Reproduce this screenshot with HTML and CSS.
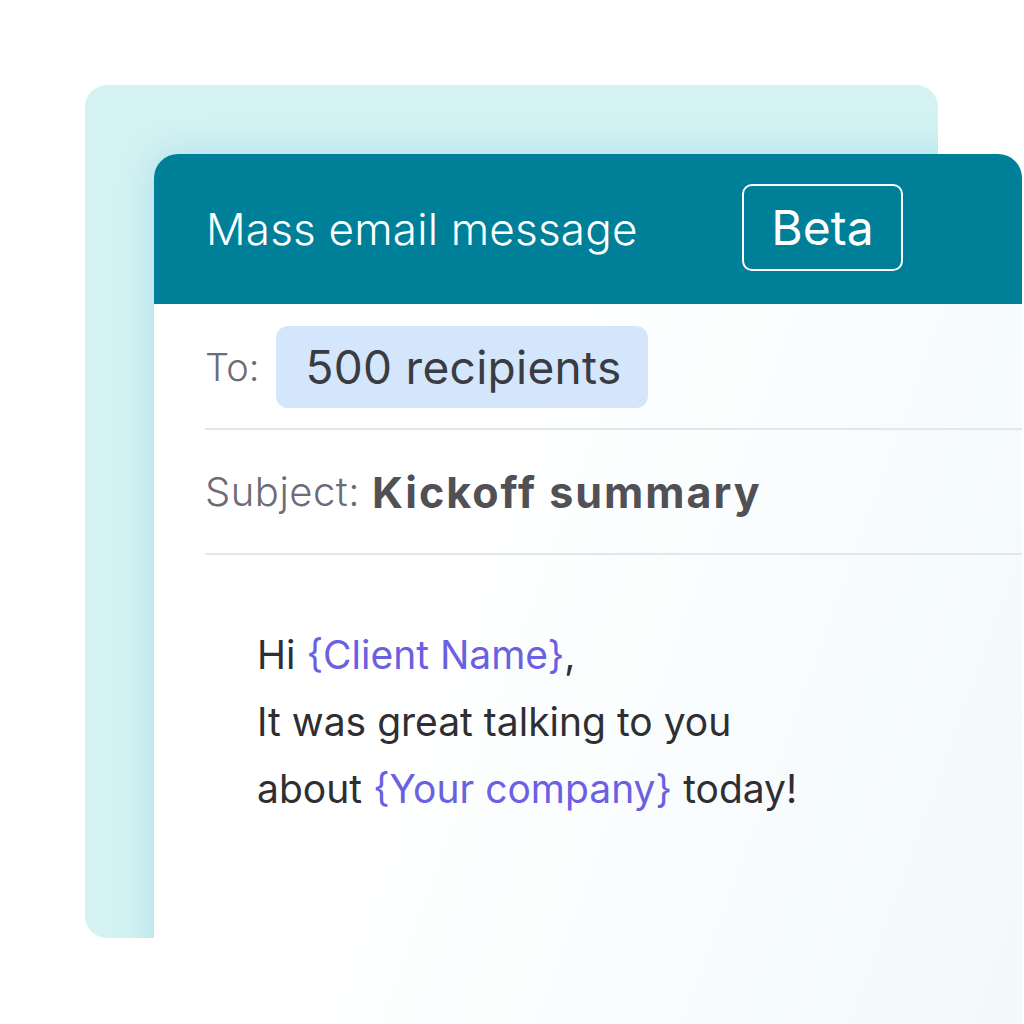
FILE: index.html
```html
<!DOCTYPE html>
<html lang="en">
<head>
<meta charset="utf-8">
<title>Mass email message</title>
<link rel="stylesheet" href="styles.css">
</head>
<body>
<div class="stage">
  <div class="back-card"></div>
  <section class="email">
    <header class="email-head">
      <h1 class="title">Mass email message</h1>
      <span class="badge">Beta</span>
    </header>
    <div class="email-body">
      <div class="field to-field">
        <span class="label">To:</span>
        <span class="chip">500 recipients</span>
      </div>
      <div class="field subject-field">
        <span class="label">Subject:</span>
        <strong class="subject">Kickoff summary</strong>
      </div>
      <div class="message">
        <p>Hi <span class="var">{Client Name}</span>,</p>
        <p>It was great talking to you</p>
        <p>about <span class="var">{Your company}</span> today!</p>
      </div>
    </div>
  </section>
</div>
</body>
</html>
```
FILE: styles.css
```css
html, body {
  margin: 0;
  padding: 0;
  background: #ffffff;
}

.stage {
  position: relative;
  width: 1024px;
  height: 1024px;
  overflow: hidden;
  box-sizing: border-box;
  padding: 154px 0 0 154px;
  font-family: "Inter", "Lato", "Liberation Sans", sans-serif;
}

.back-card {
  position: absolute;
  left: 85px;
  top: 85px;
  width: 853px;
  height: 853px;
  border-radius: 22px;
  overflow: hidden;
  background: #d4f2f2;
}

.back-card::after {
  content: "";
  position: absolute;
  left: 69px;
  top: 69px;
  right: -60px;
  bottom: -60px;
  border-radius: 24px 0 0 0;
  box-shadow: 0 0 36px rgba(120, 200, 228, 0.45);
}

.email {
  position: relative;
  width: 868px;
  height: 900px;
  border-radius: 24px 24px 0 0;
  background: linear-gradient(110deg, #ffffff 35%, #f2f9fb 100%);
}

.email-head {
  height: 150px;
  box-sizing: border-box;
  padding-left: 52px;
  display: flex;
  align-items: center;
  background: #007f99;
  border-radius: 24px 24px 0 0;
  color: #ffffff;
}

.title {
  flex: 0 0 536px;
  margin: 0;
  font-size: 44px;
  font-weight: 300;
  letter-spacing: 0.2px;
}

.badge {
  display: flex;
  align-items: center;
  justify-content: center;
  width: 161px;
  height: 87px;
  box-sizing: border-box;
  margin-top: -4px;
  border: 2px solid #ffffff;
  border-radius: 10px;
  font-size: 48px;
  font-weight: 400;
}

.email-body {
  padding-left: 51px;
}

.field {
  display: flex;
  align-items: center;
  border-bottom: 2px solid #e3e6ed;
}

.label {
  color: #6c6c78;
  font-weight: 300;
}

.to-field {
  padding: 22px 0 20px;
  font-size: 38px;
}

.to-field .label {
  margin-right: 17px;
}

.chip {
  display: flex;
  align-items: center;
  height: 82px;
  padding: 0 26px 0 29px;
  border-radius: 12px;
  background: #d4e6fc;
  color: #3b3b42;
  font-size: 46px;
  font-weight: 400;
  letter-spacing: 0.3px;
}

.subject-field {
  height: 125px;
  box-sizing: border-box;
  font-size: 40px;
}

.subject-field .label {
  letter-spacing: 0.5px;
}

.subject {
  margin-left: 12px;
  color: #505055;
  font-size: 43px;
  font-weight: 700;
  letter-spacing: 2px;
}

.message {
  padding: 66px 0 0 52px;
  color: #2e2e33;
  font-size: 39px;
  font-weight: 400;
}

.message p {
  margin: 0;
  line-height: 67px;
}

.var {
  color: #6b5fe2;
}
```
